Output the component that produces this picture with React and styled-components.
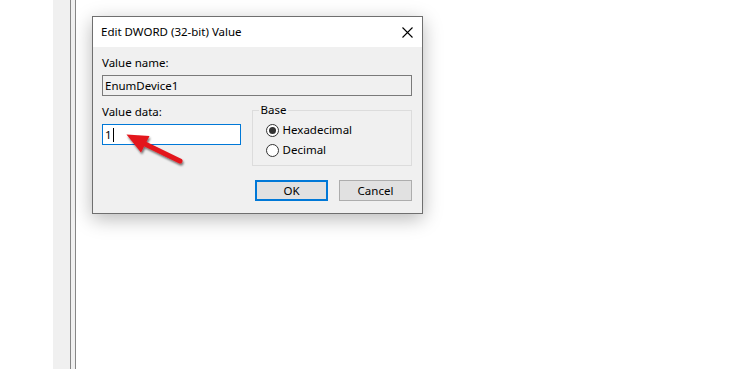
import React, { useState } from 'react';
import styled, { createGlobalStyle } from 'styled-components';

const GlobalStyle = createGlobalStyle`
  html, body {
    margin: 0;
    padding: 0;
    background: #fff;
  }
  body {
    font-family: "Noto Sans", "Open Sans", sans-serif;
    font-size: 11.5px;
    color: #000;
  }
`;

const App = () => {
  const [base, setBase] = useState('hex');

  return (
    <StPage>
      <GlobalStyle />
      <StSidePane />
      <StSplitter />
      <StMain>
        <StDialog>
          <StTitleBar>
            <StTitle>Edit DWORD (32-bit) Value</StTitle>
            <StClose aria-label='Close'>
              <svg width='11' height='11' viewBox='0 0 11 11'>
                <path d='M0.5 0.5 L10.5 10.5 M10.5 0.5 L0.5 10.5' stroke='#000' strokeWidth='1.1' />
              </svg>
            </StClose>
          </StTitleBar>
          <StBody>
            <StLabel>Value name:</StLabel>
            <StField>EnumDevice1</StField>
            <StRow>
              <StDataCol>
                <StLabel>Value data:</StLabel>
                <StField $focused>
                  1<StCaret />
                </StField>
              </StDataCol>
              <StGroup>
                <StLegend>Base</StLegend>
                <StRadioRow onClick={() => setBase('hex')}>
                  <StRadio $checked={base === 'hex'} />
                  Hexadecimal
                </StRadioRow>
                <StRadioRow onClick={() => setBase('dec')}>
                  <StRadio $checked={base === 'dec'} />
                  Decimal
                </StRadioRow>
              </StGroup>
            </StRow>
            <StButtons>
              <StButton $primary>OK</StButton>
              <StButton>Cancel</StButton>
            </StButtons>
          </StBody>
        </StDialog>
      </StMain>
      {/* red annotation arrow lying over the dialog */}
      <StArrow width='72' height='44' viewBox='0 0 72 44'>
        <defs>
          <filter id='arrowShadow' x='-30%' y='-30%' width='160%' height='160%'>
            <feDropShadow dx='1' dy='2' stdDeviation='1.2' floodColor='#000' floodOpacity='0.55' />
          </filter>
        </defs>
        <g filter='url(#arrowShadow)'>
          <line x1='25' y1='17' x2='62' y2='35' stroke='#e3161e' strokeWidth='5' strokeLinecap='round' />
          <polygon points='8.5,8.5 31.5,10 23,26.5' fill='#e3161e' />
        </g>
      </StArrow>
    </StPage>
  );
};

export default App;

const StPage = styled.div`
  position: relative;
  display: flex;
  width: 750px;
  height: 369px;
  background: #fff;
  overflow: hidden;
`;

const StSidePane = styled.div`
  width: 17px;
  margin-left: 53px;
  background: #f0f0f0;
`;

const StSplitter = styled.div`
  width: 4px;
  background: #f0f0f0;
  border-left: 1px solid #868686;
  border-right: 1px solid #868686;
`;

const StMain = styled.div`
  flex: 1;
  padding: 16px 0 0 16px;
`;

const StDialog = styled.div`
  width: 329px;
  height: 196px;
  border: 1px solid #6f6f6f;
  background: #f0f0f0;
  box-shadow: 0 5px 18px rgba(0, 0, 0, 0.28);
  display: flex;
  flex-direction: column;
`;

const StTitleBar = styled.div`
  height: 30px;
  background: #fff;
  display: flex;
  align-items: center;
  justify-content: space-between;
  padding: 0 9px 0 8px;
`;

const StTitle = styled.span`
  line-height: 16px;
`;

const StClose = styled.button`
  border: none;
  background: none;
  padding: 0;
  width: 11px;
  height: 11px;
  display: flex;
`;

const StBody = styled.div`
  padding: 8px 10px 0 9px;
  display: flex;
  flex-direction: column;
`;

const StLabel = styled.label`
  line-height: 16px;
  margin-bottom: 4px;
`;

const StField = styled.div`
  box-sizing: border-box;
  height: 21px;
  width: 100%;
  border: 1px solid ${(p) => (p.$focused ? '#0078d7' : '#7a7a7a')};
  background: ${(p) => (p.$focused ? '#fff' : '#f0f0f0')};
  padding: 0 2px;
  display: flex;
  align-items: center;
`;

const StCaret = styled.span`
  width: 1px;
  height: 14px;
  margin-left: 1px;
  background: #000;
`;

const StRow = styled.div`
  display: flex;
  gap: 11px;
  margin-top: 8px;
`;

const StDataCol = styled.div`
  width: 139px;
  display: flex;
  flex-direction: column;
`;

const StGroup = styled.div`
  position: relative;
  box-sizing: border-box;
  width: 161px;
  height: 56px;
  margin-top: 6px;
  border: 1px solid #dcdcdc;
  padding: 11px 0 0 13px;
  display: flex;
  flex-direction: column;
  gap: 4px;
`;

const StLegend = styled.span`
  position: absolute;
  top: -9px;
  left: 6px;
  padding: 0 2px;
  background: #f0f0f0;
  line-height: 16px;
`;

const StRadioRow = styled.div`
  display: flex;
  align-items: center;
  gap: 4px;
  height: 16px;
  line-height: 16px;
  cursor: default;
`;

const StRadio = styled.span`
  box-sizing: border-box;
  width: 13px;
  height: 13px;
  border-radius: 50%;
  border: 1px solid #333;
  background: #fff;
  display: flex;
  align-items: center;
  justify-content: center;
  &::after {
    content: '';
    width: 7px;
    height: 7px;
    border-radius: 50%;
    background: #333;
    display: ${(p) => (p.$checked ? 'block' : 'none')};
  }
`;

const StButtons = styled.div`
  display: flex;
  justify-content: flex-end;
  gap: 11px;
  margin-top: 14px;
`;

const StButton = styled.button`
  box-sizing: border-box;
  width: 73px;
  height: 21px;
  background: #e1e1e1;
  border: ${(p) => (p.$primary ? '2px solid #0078d7' : '1px solid #adadad')};
  font-family: inherit;
  font-size: 11.5px;
  color: #000;
  padding: 0;
`;

const StArrow = styled.svg`
  position: absolute;
  left: 118px;
  top: 126px;
  pointer-events: none;
`;
